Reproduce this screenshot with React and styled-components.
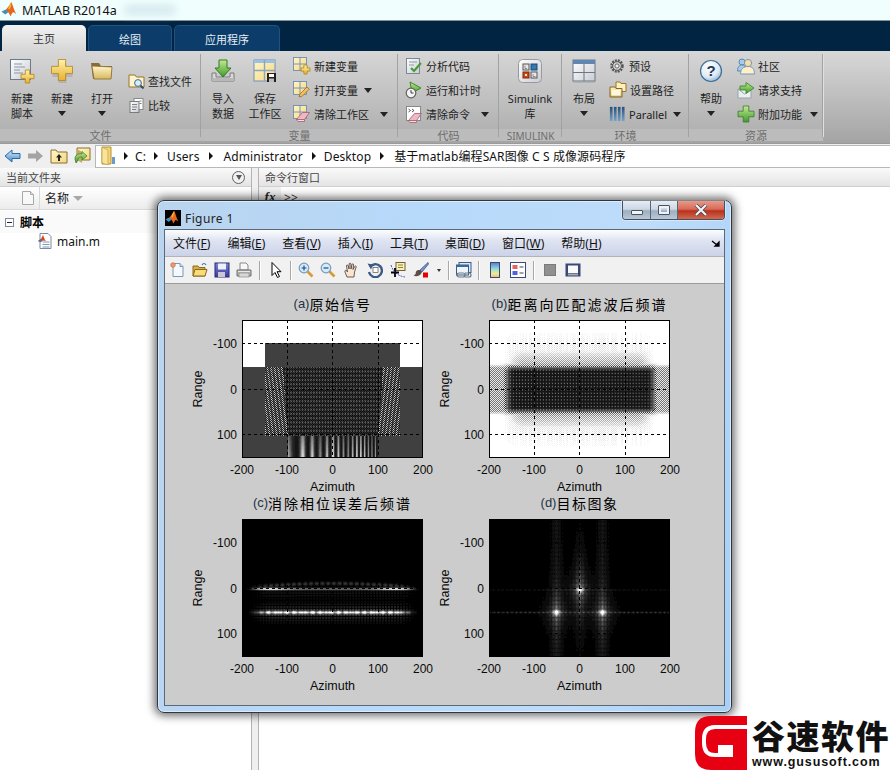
import React, { useMemo } from "react";
import styled, { createGlobalStyle } from "styled-components";

const GlobalStyle = createGlobalStyle`
	html, body {
		margin: 0;
		padding: 0;
		background: #fff;
	}
	#root {
		width: 890px;
		height: 770px;
		overflow: hidden;
	}
	* {
		box-sizing: border-box;
	}
`;

const UI_FONT = `"Noto Sans", "Noto Sans CJK SC", sans-serif`;

/* ---------- heatmap helpers: one path per grey level ---------- */

const smooth = (a, b, x) => {
	const t = Math.min(1, Math.max(0, (x - a) / (b - a)));
	return t * t * (3 - 2 * t);
};

const noise = (x, y) => {
	const s = Math.sin(x * 12.9898 + y * 78.233) * 43758.5453;
	return s - Math.floor(s);
};

const sourceSignal = (u, v) => {
	if (v < 23) return 1;
	if (v < 47 && (u < 23 || u >= 158)) return 1;
	const base = 0.24;
	const cx = u - 90.5;
	if (u >= 23 && u < 158 && v >= 47 && v < 116) {
		const half = 50 - (v - 47) * 0.07;
		if (Math.abs(cx) > half) {
			const slant = cx + Math.sign(cx) * (v - 80) * 0.14;
			const on = 0.5 + 0.5 * Math.cos(slant * 1.75);
			return (u + v) % 2 === 0 ? 0.2 + 0.55 * on + 0.12 * noise(u, v) : 0.14;
		}
		const lat = Math.abs(Math.cos(u * 1.1) * Math.cos(v * 0.74));
		return 0.03 + 0.3 * lat * lat + ((u + v) % 2 === 0 ? 0.12 : 0);
	}
	if (v >= 116 && Math.abs(cx) < 45) {
		const s = Math.pow(Math.abs(Math.cos(cx * 0.55 + cx * cx * 0.0045)), 4);
		return 0.1 + (0.5 + (v - 116) * 0.018) * s * (0.75 + 0.25 * Math.cos(cx * 0.24));
	}
	return base;
};

const rangeCompressed = (u, v) => {
	const dy = Math.abs(v - 69);
	const sx = smooth(7, 24, u) * smooth(174, 158, u);
	let d = 0.9 * sx * (1 - smooth(18, 28, dy));
	d = Math.max(d, 0.3 * (1 - smooth(21, 26, dy)));
	d = Math.max(d, 0.3 * smooth(14, 34, u) * smooth(167, 147, u) * (1 - smooth(20, 45, dy)));
	d = Math.max(d, 0.07 * smooth(10, 30, u) * smooth(170, 150, u) * (1 - smooth(40, 62, dy)) * (noise(u, 1) > 0.4 ? 1 : 0.2));
	if (d > 0.5) {
		const lat = Math.abs(Math.cos(u * 1.05) * Math.cos(v * 0.95));
		return 1 - d * (1 - 0.42 * Math.pow(lat, 5));
	}
	return (u + v) % 2 === 0 ? 1 - d * 1.8 : 1 - d * 0.25;
};

const phaseCorrected = (u, v) => {
	const env = smooth(4, 30, u) * smooth(177, 151, u);
	const dy1 = v - 69.5;
	const dy2 = v - 93;
	const arc = 69 - 5 * Math.cos(((u - 90) / 90) * 1.4);
	const edge = 0.45 + 0.55 * Math.exp(-Math.pow((Math.abs(u - 90.5) - 62) / 18, 2));
	let val = 1.0 * smooth(2, 20, u) * smooth(179, 161, u) * edge * Math.exp(-(dy1 * dy1) / 1.3);
	val += 0.22 * env * Math.exp(-((v - arc) * (v - arc)) / 3) * Math.abs(Math.cos(u * 0.55));
	val += 1.15 * env * Math.exp(-(dy2 * dy2) / 2.6) * (0.68 + 0.32 * Math.cos(u * 0.85) * Math.cos(u * 0.13));
	val += 0.26 * env * Math.exp(-(dy2 * dy2) / 70) * Math.abs(Math.cos(u * 1.05) * Math.cos(v * 1.15));
	val += 0.1 * env * Math.exp(-((v - 74) * (v - 74)) / 18) * Math.abs(Math.cos(u * 1.05) * Math.cos(v * 1.15));
	return Math.min(1, val);
};

const TARGETS = [
	[90.5, 70.5],
	[67, 93],
	[113, 93],
];

const targetImage = (u, v) => {
	let val = 0;
	TARGETS.forEach(([px, py], i) => {
		const dx = u - px;
		const dy = v - py;
		val += 0.7 * Math.exp(-(dx * dx + dy * dy * 1.6) / 9);
		const tex = 0.5 + 0.5 * Math.abs(Math.cos(dx * 0.95) * Math.cos(v * 0.72));
		val += 0.62 * Math.exp(-(Math.abs(dx) / 6 + Math.abs(dy) / 13)) * tex;
		val += 0.1 * tex * Math.exp(-(dx * dx) / 26) * (i === 0 ? 1.3 * Math.exp(-(dy * dy) / 2500) : 1);
		const line = Math.exp(-(dy * dy) / 0.9);
		val += (i === 0 ? 0.07 : 0.1) * line * (0.6 + 0.4 * Math.cos(u * 1.4));
	});
	return Math.min(1, val);
};

const LEVELS = 24;

const Heatmap = ({ fn, width, height }) => {
	const paths = useMemo(() => {
		const buckets = Array.from({ length: LEVELS + 1 }, () => []);
		for (let y = 0; y < height; y++) {
			let start = 0;
			let last = Math.round(fn(0, y) * LEVELS);
			for (let x = 1; x <= width; x++) {
				const lvl = x < width ? Math.round(fn(x, y) * LEVELS) : -1;
				if (lvl !== last) {
					if (last > 0) buckets[last].push(`M${start} ${y}h${x - start}v1h-${x - start}z`);
					start = x;
					last = lvl;
				}
			}
		}
		return buckets.map((b) => b.join(""));
	}, [fn, width, height]);
	return (
		<g shapeRendering="crispEdges">
			<rect width={width} height={height} fill="#000" />
			{paths.map((d, i) => {
				if (!d) return null;
				const g = Math.round((i / LEVELS) * 255);
				return <path key={i} d={d} fill={`rgb(${g},${g},${g})`} />;
			})}
		</g>
	);
};

/* ---------- figure subplot ---------- */

const AX_W = 181;
const AX_H = 138;
const X_TICKS = [
	[0, "-200"],
	[45, "-100"],
	[90.5, "0"],
	[136, "100"],
	[181, "200"],
];
const Y_TICKS = [
	[23, "-100"],
	[69, "0"],
	[114, "100"],
];

const PlotCell = styled.div`
	display: flex;
	flex-direction: column;
	height: 199px;
`;

const PlotTitle = styled.div`
	height: 25px;
	width: ${AX_W}px;
	margin-left: 54px;
	display: flex;
	justify-content: center;
	white-space: nowrap;
	font-family: "Noto Sans CJK SC", sans-serif;
	font-size: 14px;
	line-height: 18px;
	letter-spacing: ${(p) => p.$spacing}px;
	color: #000;
`;

const TitleTag = styled.span`
	font-family: "Liberation Sans", sans-serif;
	font-size: 13px;
	letter-spacing: 0;
	color: #234;
`;

const AxisText = styled.text`
	font-family: "Liberation Sans", sans-serif;
	font-size: ${(p) => p.$size}px;
	fill: #0a0a0a;
`;

const Subplot = ({ tag, title, fn, spacing }) => (
	<PlotCell>
		<PlotTitle $spacing={spacing}>
			<TitleTag>{tag}</TitleTag>
			{title}
		</PlotTitle>
		<svg width="247" height="174" style={{ overflow: "visible" }}>
			<g transform="translate(54 0)">
				<Heatmap fn={fn} width={AX_W} height={AX_H} />
				<g stroke="#000" strokeWidth="1" fill="none" shapeRendering="crispEdges">
					{X_TICKS.slice(1, 4).map(([x]) => (
						<path key={x} d={`M${Math.floor(x) + 0.5} 0V${AX_H}`} strokeDasharray="3 3" />
					))}
					{Y_TICKS.map(([y]) => (
						<path key={y} d={`M0 ${y + 0.5}H${AX_W}`} strokeDasharray="3 3" />
					))}
					<rect x="0.5" y="0.5" width={AX_W - 1} height={AX_H - 1} />
				</g>
				{X_TICKS.map(([x, t]) => (
					<AxisText key={x} $size="12" x={x} y={AX_H + 16} textAnchor="middle">
						{t}
					</AxisText>
				))}
				{Y_TICKS.map(([y, t]) => (
					<AxisText key={y} $size="12" x="-5" y={y + 5} textAnchor="end">
						{t}
					</AxisText>
				))}
				<AxisText $size="12.5" x={AX_W / 2} y={AX_H + 33} textAnchor="middle">
					Azimuth
				</AxisText>
				<AxisText $size="12.5" transform={`translate(-40 ${AX_H / 2}) rotate(-90)`} textAnchor="middle">
					Range
				</AxisText>
			</g>
		</svg>
	</PlotCell>
);

/* ---------- icons ---------- */

const HiddenDefs = styled.svg`
	position: absolute;
	width: 0;
	height: 0;
`;

const Defs = () => (
	<HiddenDefs aria-hidden="true">
		<defs>
			<linearGradient id="gold" x1="0" y1="0" x2="0" y2="1">
				<stop offset="0" stopColor="#fff3a8" />
				<stop offset="1" stopColor="#e8b030" />
			</linearGradient>
			<linearGradient id="folder" x1="0" y1="0" x2="0" y2="1">
				<stop offset="0" stopColor="#fff6c8" />
				<stop offset="1" stopColor="#d8b860" />
			</linearGradient>
			<linearGradient id="green" x1="0" y1="0" x2="0" y2="1">
				<stop offset="0" stopColor="#c4ea90" />
				<stop offset="1" stopColor="#3e9a2c" />
			</linearGradient>
			<linearGradient id="paper" x1="0" y1="0" x2="1" y2="1">
				<stop offset="0" stopColor="#ffffff" />
				<stop offset="1" stopColor="#c8ccd4" />
			</linearGradient>
			<linearGradient id="cell" x1="0" y1="0" x2="1" y2="1">
				<stop offset="0" stopColor="#fff6c8" />
				<stop offset="1" stopColor="#f4d880" />
			</linearGradient>
			<linearGradient id="sky" x1="0" y1="0" x2="0" y2="1">
				<stop offset="0" stopColor="#d4ecff" />
				<stop offset="1" stopColor="#4c8cc8" />
			</linearGradient>
			<radialGradient id="helpball" cx="0.4" cy="0.3" r="0.8">
				<stop offset="0" stopColor="#ffffff" />
				<stop offset="0.6" stopColor="#dfeaf4" />
				<stop offset="1" stopColor="#7fa8cc" />
			</radialGradient>
			<linearGradient id="rainbow" x1="0" y1="0" x2="0" y2="1">
				<stop offset="0" stopColor="#5a78d8" />
				<stop offset="0.45" stopColor="#98e0d0" />
				<stop offset="0.75" stopColor="#f0ec90" />
				<stop offset="1" stopColor="#f4b070" />
			</linearGradient>
			<linearGradient id="blueBars" x1="0" y1="0" x2="0" y2="1">
				<stop offset="0" stopColor="#24507c" />
				<stop offset="1" stopColor="#7aa2c8" />
			</linearGradient>
			<linearGradient id="floppy" x1="0" y1="0" x2="0" y2="1">
				<stop offset="0" stopColor="#7a82d8" />
				<stop offset="1" stopColor="#3a3c98" />
			</linearGradient>
		</defs>
	</HiddenDefs>
);

const Svg = ({ s = 16, vb = 16, children }) => (
	<svg width={s} height={s} viewBox={`0 0 ${vb} ${vb}`} style={{ flex: "none", display: "block" }}>
		{children}
	</svg>
);

const Plus = ({ x, y, r, w, fill = "url(#gold)", stroke = "#b08420" }) => (
	<path
		d={`M${x - w} ${y - r}h${2 * w}v${r - w}h${r - w}v${2 * w}h${-(r - w)}v${r - w}h${-2 * w}v${-(r - w)}h${-(r - w)}v${-2 * w}h${r - w}z`}
		fill={fill}
		stroke={stroke}
		strokeWidth="0.8"
	/>
);

const GridCell = ({ size = 13 }) => (
	<g stroke="#6f8db8" strokeWidth="0.9">
		<rect x="0.5" y="0.5" width={size} height={size} fill="url(#cell)" />
		<path d={`M${size / 2 + 0.5} 0.5V${size + 0.5}M0.5 ${size / 2 + 0.5}H${size + 0.5}`} />
	</g>
);

const Eraser = ({ t }) => (
	<g transform={t}>
		<path d="M0 8L6 1h7l-5 7z" fill="#f0b8c4" stroke="#a06070" strokeWidth="0.8" />
		<path d="M0 8l1.5 2h6.5L8 8z" fill="#f8dce0" stroke="#a06070" strokeWidth="0.8" />
	</g>
);

const IconNewScript = () => (
	<Svg s={26} vb={26}>
		<rect x="1.5" y="1.5" width="20" height="20" fill="url(#paper)" stroke="#6a7a8c" />
		<path d="M5 6h8M5 9h11M5 12h6M5 15h9" stroke="#8a96a4" strokeWidth="1" />
		<Plus x={18.5} y={18.5} r={6.5} w={2.2} />
	</Svg>
);

const IconPlusLarge = () => (
	<Svg s={24} vb={24}>
		<path d="M8 3h8v6h6v8h-6v6H8v-6H2V9h6z" fill="#9a9a9a" opacity="0.45" transform="translate(0.5 1)" />
		<Plus x={12} y={11} r={10.5} w={3.6} />
	</Svg>
);

const IconFolderLarge = () => (
	<Svg s={24} vb={24}>
		<path d="M1 4h8l2 3h11l-1 13H3z" fill="#8a6a3a" />
		<path d="M2 7l2 13h17l1-12z" fill="url(#folder)" stroke="#8a6a30" strokeWidth="0.8" />
	</Svg>
);

const IconFind = () => (
	<Svg s={17} vb={17}>
		<path d="M1 2h6l1.5 2H16v10H1z" fill="#fdf4d0" stroke="#9a7428" />
		<circle cx="10" cy="10" r="3.4" fill="#d8ecfa" stroke="#3a6a90" />
		<path d="M12.5 12.5l3 3" stroke="#2a4a70" strokeWidth="1.8" />
	</Svg>
);

const IconCompare = () => (
	<Svg s={17} vb={17}>
		<rect x="6" y="1.5" width="9" height="11" fill="#fff" stroke="#8a8a8a" />
		<rect x="2" y="4.5" width="9" height="11" fill="url(#paper)" stroke="#7a7a7a" />
		<path d="M4 7.5h5M4 10h5M4 12.5h4M11.5 4h2M11.5 6.500h2" stroke="#808080" />
	</Svg>
);

const IconImport = () => (
	<Svg s={24} vb={24}>
		<path d="M1 14h4v4h14v-4h4v8H1z" fill="#d8d8d8" stroke="#7a7a7a" />
		<rect x="1" y="19" width="22" height="3" fill="#b8b8b8" />
		<path d="M8 1h8v8h4l-8 9-8-9h4z" fill="url(#green)" stroke="#2f7a20" />
	</Svg>
);

const IconSaveWs = () => (
	<Svg s={24} vb={24}>
		<rect x="1" y="1" width="21" height="21" fill="url(#cell)" stroke="#7090b8" />
		<rect x="1" y="1" width="21" height="3" fill="#9cc0e4" />
		<path d="M11.500 1v21M1 11.500h21" stroke="#8aa4c4" strokeWidth="1.4" />
		<rect x="14" y="14" width="9" height="9" fill="#202020" />
		<rect x="16" y="15" width="5" height="3" fill="#fff" />
		<rect x="16" y="19.500" width="5" height="3.500" fill="#bbb" />
	</Svg>
);

const IconNewVar = () => (
	<Svg s={18} vb={18}>
		<GridCell />
		<Plus x={12.5} y={12.5} r={4.5} w={1.6} />
	</Svg>
);

const IconOpenVar = () => (
	<Svg s={18} vb={18}>
		<GridCell />
		<path d="M6 16l1-3 7-7 2.200 2.200-7 7z" fill="#f2c060" stroke="#a06820" strokeWidth="0.8" />
	</Svg>
);

const IconClearWs = () => (
	<Svg s={18} vb={18}>
		<GridCell />
		<Eraser t="translate(3.500 6.500)" />
	</Svg>
);

const IconAnalyze = () => (
	<Svg s={18} vb={18}>
		<rect x="1.500" y="1.500" width="13" height="15" fill="url(#paper)" stroke="#7a8a94" />
		<path d="M4 5h8M4 8h5" stroke="#909aa4" />
		<path d="M6 11l3 3 7-8" fill="none" stroke="#4a9a38" strokeWidth="2.200" />
	</Svg>
);

const IconRunTime = () => (
	<Svg s={18} vb={18}>
		<path d="M5 1l11 6-9 5z" fill="url(#green)" stroke="#3a8a28" />
		<circle cx="6" cy="12" r="4.800" fill="#f4f4f4" stroke="#606060" strokeWidth="1.200" />
		<path d="M6 9v3h2.500" fill="none" stroke="#404040" />
	</Svg>
);

const IconClearCmd = () => (
	<Svg s={18} vb={18}>
		<rect x="1.500" y="1.500" width="14" height="14" fill="#fff" stroke="#888" />
		<path d="M3.500 4l2 1.500-2 1.500M7 4l2 1.500-2 1.500" fill="none" stroke="#333" strokeWidth="0.8" />
		<Eraser t="translate(3.500 7.500)" />
	</Svg>
);

const IconSimulink = () => (
	<Svg s={24} vb={24}>
		<rect x="0.500" y="0.500" width="23" height="23" rx="4" fill="url(#paper)" stroke="#9a9a9a" />
		<g strokeWidth="1">
			<rect x="5" y="5" width="6" height="6" fill="#e8e8e8" stroke="#555" />
			<rect x="13" y="5" width="6" height="6" fill="#2a78b8" stroke="#1a4a78" />
			<rect x="5" y="13" width="6" height="6" fill="#c84a18" stroke="#802808" />
			<rect x="13" y="13" width="6" height="6" fill="#e8e8e8" stroke="#555" />
		</g>
		<rect x="7" y="15" width="2" height="2" fill="#f4e0c0" />
		<path d="M7 6.500v3h2M15 8h2v-1.500M15 15v2.500h2.500" fill="none" stroke="#777" strokeWidth="0.8" />
	</Svg>
);

const IconLayout = () => (
	<Svg s={24} vb={24}>
		<rect x="1" y="1" width="22" height="21" fill="url(#paper)" stroke="#6a7680" />
		<rect x="1" y="1" width="22" height="4" fill="#5f87b0" />
		<path d="M12 5v17M1 13.500h22" stroke="#6a7680" />
		<rect x="1" y="22" width="22" height="1.500" fill="#a0a0a0" />
	</Svg>
);

const IconGear = () => (
	<Svg s={16} vb={16}>
		<circle cx="8" cy="8" r="5.500" fill="none" stroke="#555" strokeWidth="2.400" strokeDasharray="1.900 1.000" />
		<circle cx="8" cy="8" r="4.300" fill="#d8d8d8" stroke="#555" />
		<circle cx="8" cy="8" r="2.100" fill="#f0f0f0" stroke="#666" />
	</Svg>
);

const IconPath = () => (
	<Svg s={18} vb={18}>
		<path d="M7 1h4l1 1.500h5v8H7z" fill="#fff0c0" stroke="#9a7428" />
		<path d="M1 6h5l1 1.500h6V16H1z" fill="url(#folder)" stroke="#8a6420" />
		<rect x="2.500" y="9" width="9" height="5.500" fill="#fff8e0" />
	</Svg>
);

const IconParallel = () => (
	<Svg s={16} vb={18}>
		<g fill="url(#blueBars)">
			<rect x="1" y="1" width="3" height="16" />
			<rect x="5.500" y="1" width="3" height="16" />
			<rect x="10" y="1" width="3" height="16" />
			<rect x="14.500" y="1" width="3" height="16" />
		</g>
	</Svg>
);

const IconHelp = () => (
	<Svg s={24} vb={24}>
		<circle cx="12" cy="12" r="10.500" fill="url(#helpball)" stroke="#3c6e96" strokeWidth="1.200" />
		<text x="12" y="17" textAnchor="middle" fontFamily="Liberation Sans, sans-serif" fontWeight="700" fontSize="15" fill="#233a5a">
			?
		</text>
	</Svg>
);

const IconCommunity = () => (
	<Svg s={18} vb={18}>
		<circle cx="5" cy="5" r="3" fill="#a8cce8" stroke="#5a8ab0" />
		<path d="M0.500 14c0-4 2-6 4.500-6s3 1 3 2v4z" fill="#a8cce8" stroke="#5a8ab0" />
		<circle cx="11" cy="6" r="3.600" fill="#f8dca8" stroke="#7a98b8" />
		<path d="M3.500 17c0-5 3-7.500 7.500-7.500s6.500 2.500 6.500 7.500z" fill="#fff0c8" stroke="#7a98b8" />
	</Svg>
);

const IconSupport = () => (
	<Svg s={18} vb={18}>
		<path d="M1 8h13v9H1z" fill="#eceff2" stroke="#9aa2aa" />
		<path d="M1 8l6.500 5L14 8" fill="none" stroke="#9aa2aa" />
		<path d="M3 5h6V1.500L17 7l-8 5.500V9H3z" fill="url(#green)" stroke="#3a8a28" strokeWidth="0.9" />
	</Svg>
);

const IconAddon = () => (
	<Svg s={18} vb={18}>
		<Plus x={9} y={9} r={8} w={2.800} fill="url(#green)" stroke="#3a7a28" />
	</Svg>
);

const IconBack = () => (
	<Svg s={18} vb={18}>
		<path d="M1 9l7-6v3.500h8v5H8V15z" fill="url(#sky)" stroke="#2a6aa0" />
	</Svg>
);

const IconForward = () => (
	<Svg s={18} vb={18}>
		<path d="M17 9l-7-6v3.500H2v5h8V15z" fill="#a4a4a4" />
	</Svg>
);

const IconUpFolder = () => (
	<Svg s={18} vb={18}>
		<path d="M1 3h5l1.500 2H17v11H1z" fill="url(#cell)" stroke="#8a7030" />
		<path d="M9 7l-3 3.500h2V14h2v-3.500h2z" fill="#222" />
	</Svg>
);

const IconBrowse = () => (
	<Svg s={18} vb={18}>
		<path d="M4 1h13v12H4z" fill="url(#cell)" stroke="#8a7030" />
		<path d="M4 2l5 3v11l-5-3z" fill="#c8a860" />
		<path d="M2 12c0-4 3-6 7-5V4.500L14 9l-5 4v-3c-2-.5-4 .5-4.500 4l-1.500 2z" fill="url(#green)" stroke="#2f7a20" strokeWidth="0.7" />
	</Svg>
);

const IconAddressFolder = () => (
	<Svg s={20} vb={20}>
		<path d="M3 1h9v17H3z" fill="#f4d878" stroke="#b89030" />
		<path d="M3 1l6 3v15l-6-2z" fill="#f8e498" stroke="#b89030" strokeWidth="0.6" />
		<rect x="13" y="11" width="3" height="7" fill="#6a9ac8" />
	</Svg>
);

const IconPage = () => (
	<Svg s={14} vb={14}>
		<path d="M1.500 0.500h8l3 3v10h-11z" fill="#f8f8f8" stroke="#a8a8a8" />
		<path d="M9.500 0.500v3h3" fill="#e0e0e0" stroke="#a8a8a8" />
	</Svg>
);

const IconScript = () => (
	<Svg s={16} vb={16}>
		<path d="M3 0.500h8l3 3v12H3z" fill="#fff" stroke="#7a8aa0" />
		<path d="M5.500 9h7M5.500 11.500h7M5.500 14h7" stroke="#7a98b8" />
		<path d="M1 8l3-2 2-4 2 5 1 1-3-.5L4 9z" fill="#d8481c" />
		<path d="M1 8l3-2 1 1.500-1.500 1.500z" fill="#3a7ab8" />
	</Svg>
);

const IconMatlab = ({ s = 16, bg }) => (
	<Svg s={s} vb={16}>
		{bg && <rect width="16" height="16" fill="#000" />}
		<path d="M0.500 9.500L4.500 7.500 7 4.500l2-3.500c.5 0 .9 1.200 1.600 3.400.6 2 1.600 4.800 2.900 7.100-1.100-.7-2-1.700-2.700-1.600-.7.100-1.300 1.900-2.500 3.600-.7-1.700-1.400-3.500-2.600-4.400-1.300.2-2.200-.1-3 .4z" fill="#e8661c" />
		<path d="M0.500 9.500L4.500 7.500l2.300 2.500c-1.300.4-1.900 1.100-3 2z" fill="#3f8fc0" />
		<path d="M7 4.500l2-3.500c.3 2 .2 4-1.600 6.700l-1-1z" fill="#f4b030" />
	</Svg>
);

/* figure toolbar icons */

const ToolNew = () => (
	<Svg>
		<path d="M3 1.500h7l3 3v10H3z" fill="#f4f9ff" stroke="#7a98b8" />
		<path d="M10 1.500v3h3" fill="#cfe0f0" stroke="#7a98b8" />
		<circle cx="3" cy="3" r="2.300" fill="#f09a70" stroke="#c85a30" strokeWidth="0.6" />
	</Svg>
);
const ToolOpen = () => (
	<Svg>
		<path d="M1 4h5l1 1.500h6V14H1z" fill="#d8b040" stroke="#8a6820" />
		<path d="M1 14l2-6.500h12L13 14z" fill="#f8dc78" stroke="#8a6820" />
		<path d="M10 3c1-2 3-2 4 0" fill="none" stroke="#3a7ab8" strokeWidth="1.200" />
	</Svg>
);
const ToolSave = () => (
	<Svg>
		<rect x="1" y="1" width="14" height="14" fill="url(#floppy)" stroke="#2a2a78" />
		<rect x="4" y="1.500" width="8" height="6" fill="#f0f0f8" />
		<rect x="4" y="10" width="7" height="5" fill="#c8c8d8" />
	</Svg>
);
const ToolPrint = () => (
	<Svg>
		<path d="M4 1h6l2 2v5H4z" fill="#f8f8f8" stroke="#888" />
		<path d="M1 8h14v6H1z" fill="#b8b8b8" stroke="#707070" />
		<rect x="3" y="11" width="10" height="4" fill="#d8d8d8" stroke="#808080" strokeWidth="0.6" />
		<path d="M2 9.500h12" stroke="#e8e8e8" />
	</Svg>
);
const ToolPointer = () => (
	<Svg>
		<path d="M4 0.500v13l3-3 2.500 5 2-1-2.500-4.800h4z" fill="#fff" stroke="#000" />
	</Svg>
);
const ToolZoom = ({ minus }) => (
	<Svg>
		<path d="M9.500 9.500l5 5" stroke="#d89a38" strokeWidth="2.600" />
		<circle cx="6" cy="6" r="4.800" fill="#d4ecfa" stroke="#7a9ab8" strokeWidth="1.200" />
		<path d={minus ? "M3.500 6h5" : "M3.500 6h5M6 3.500v5"} stroke="#1a4a88" strokeWidth="1.200" />
	</Svg>
);
const ToolHand = () => (
	<Svg>
		<path d="M4 15l-2-5c-.5-1.500.5-2 1.500-1.500L4.500 10 3.500 4c-.2-1.200 1.300-1.500 1.700-.3L6 7l.2-5c0-1.200 1.600-1.200 1.700 0L8 7l1-4.500c.3-1.200 1.800-.8 1.600.4L10 7.500l1.700-3c.6-1 1.900-.4 1.400.7L11.500 10l-.5 5z" fill="#fbe4cc" stroke="#443a38" strokeWidth="0.8" />
	</Svg>
);
const ToolRotate = () => (
	<Svg>
		<path d="M3 5a6.500 6.500 0 1 1-1 5" fill="none" stroke="#3a5a88" strokeWidth="2.400" />
		<path d="M0.500 1.500l5.500 1-2 5z" fill="#3a5a88" />
		<rect x="6" y="5.500" width="5" height="5" fill="#fff" stroke="#555" strokeWidth="0.7" />
	</Svg>
);
const ToolDataCursor = () => (
	<Svg>
		<rect x="6" y="0.500" width="9" height="8" fill="#f8f0b8" stroke="#706030" />
		<path d="M8 3h5M8 5.500h5" stroke="#706030" strokeWidth="0.8" />
		<path d="M5 15V6M1 10.500h8" stroke="#000" strokeWidth="1.800" />
		<path d="M1 3c2 7 7 11 14 12" fill="none" stroke="#2030c0" strokeWidth="0.8" strokeDasharray="2 1" />
	</Svg>
);
const ToolBrush = () => (
	<Svg>
		<path d="M15 0.500L7 8l2 2 6.500-8z" fill="#7a90d8" stroke="#38487a" strokeWidth="0.7" />
		<path d="M7 8c-3-.5-5 2-4 3-1 2-2 2.500-2.500 2.800 3 1 7 .5 8.500-3.800z" fill="#5a5048" />
		<rect x="10" y="10.500" width="5" height="5" fill="#e80000" />
	</Svg>
);
const ToolLink = () => (
	<Svg>
		<rect x="3" y="0.500" width="12" height="10" fill="#d8e8f4" stroke="#3a5a88" />
		<rect x="0.500" y="3" width="12" height="10" fill="#eef4fa" stroke="#3a5a88" />
		<rect x="0.500" y="3" width="12" height="2" fill="#3a6a98" />
		<path d="M3 11h4a2 2 0 0 1 0 4H3a2 2 0 0 1 0-4zM9 11h4a2 2 0 0 1 0 4H9" fill="none" stroke="#6a7a88" strokeWidth="1.200" />
	</Svg>
);
const ToolColorbar = () => (
	<Svg>
		<rect x="3.500" y="0.500" width="9" height="15" fill="url(#rainbow)" stroke="#3a4a78" />
	</Svg>
);
const ToolLegend = () => (
	<Svg>
		<rect x="0.500" y="0.500" width="15" height="15" fill="#fff" stroke="#3a4a78" />
		<rect x="2.500" y="3" width="5" height="4" fill="#e86060" />
		<rect x="2.500" y="9" width="5" height="4" fill="#5060e0" />
		<path d="M9.500 5h4M9.500 11h4" stroke="#444" />
	</Svg>
);
const ToolGrey = () => (
	<Svg>
		<rect x="2.500" y="2.500" width="11" height="11" fill="#909090" stroke="#7a7a7a" />
	</Svg>
);
const ToolFrame = () => (
	<Svg>
		<rect x="0.500" y="1.500" width="15" height="13" fill="#3a4a78" />
		<rect x="3" y="3.500" width="10" height="7.500" fill="#fafafa" />
		<rect x="3" y="11.500" width="10" height="2" fill="#a8a8a8" />
	</Svg>
);

/* ---------- app chrome ---------- */

const Desktop = styled.div`
	position: relative;
	width: 890px;
	height: 770px;
	display: flex;
	flex-direction: column;
	font-family: ${UI_FONT};
	background: #fff;
	overflow: hidden;
`;

const TitleBar = styled.div`
	height: 21px;
	flex: none;
	display: flex;
	align-items: center;
	padding-left: 1px;
	gap: 3px;
	background: #f0fefe;
	border-bottom: 1px solid #8a9094;
	font-size: 12.500px;
	color: #111;
`;

const BlurredPath = styled.span`
	margin-left: 5px;
	width: 50px;
	height: 8px;
	background: #cfe4ea;
	filter: blur(4px);
`;

const TabStrip = styled.div`
	height: 30px;
	flex: none;
	display: flex;
	align-items: flex-end;
	gap: 2px;
	padding-left: 2px;
	background: #012442;
`;

const Tab = styled.div`
	width: ${(p) => p.$w}px;
	height: 26px;
	display: flex;
	align-items: center;
	justify-content: center;
	border-radius: 5px 5px 0 0;
	font-size: 11px;
	color: ${(p) => (p.$active ? "#333" : "#e8eef4")};
	background: ${(p) => (p.$active ? "linear-gradient(#f2f2f2, #d6d6d6)" : "#0b3c6a")};
	border: ${(p) => (p.$active ? "none" : "1px solid #1f527f")};
	border-bottom: none;
`;

const Ribbon = styled.div`
	height: 93px;
	flex: none;
	display: flex;
	background: linear-gradient(#d8d8d8, #a4a4a4);
	border-bottom: 1px solid #9a9a9a;
`;

const Section = styled.div`
	width: ${(p) => p.$w}px;
	flex: none;
	display: flex;
	flex-direction: column;
	padding-top: 3px;
	position: relative;
	&::after {
		content: "";
		position: absolute;
		right: 0;
		top: 3px;
		bottom: 6px;
		width: 1px;
		background: #a2a2a2;
		box-shadow: 1px 0 0 #e0e0e0;
	}
`;

const SectionBody = styled.div`
	height: 75px;
	flex: none;
	display: flex;
	padding-left: ${(p) => p.$pad}px;
	background: linear-gradient(#d6d6d6, #b2b2b2);
	margin-top: -3px;
	padding-top: 3px;
	box-sizing: content-box;
`;

const SectionLabel = styled.div`
	height: 12px;
	flex: none;
	display: flex;
	align-items: center;
	justify-content: center;
	padding-top: 1px;
	background: #bcbcbc;
	font-size: ${(p) => (p.$latin ? 10 : 11)}px;
	line-height: 12px;
	color: #6e6e6e;
`;

const LargeButton = styled.div`
	width: ${(p) => p.$w}px;
	flex: none;
	display: flex;
	flex-direction: column;
	align-items: center;
	padding-top: 5px;
	font-size: 11px;
	line-height: 15px;
	color: #222;
	margin-right: ${(p) => p.$mr || 0}px;
`;

const IconBox = styled.div`
	height: 24px;
	margin-bottom: 8px;
	display: flex;
	align-items: center;
`;

const ButtonLine = styled.div`
	height: 15px;
	display: flex;
	align-items: center;
	white-space: nowrap;
`;

const SmallColumn = styled.div`
	display: flex;
	flex-direction: column;
	flex: none;
	padding-top: ${(p) => p.$top || 0}px;
	width: ${(p) => p.$w}px;
	margin-left: ${(p) => p.$ml || 0}px;
`;

const SmallButton = styled.div`
	height: 24px;
	display: flex;
	align-items: center;
	gap: ${(p) => p.$gap ?? 3}px;
	font-size: 11px;
	color: #222;
	white-space: nowrap;
`;

const Caret = styled.span`
	width: 0;
	height: 0;
	border-left: 4.500px solid transparent;
	border-right: 4.500px solid transparent;
	border-top: 5px solid #222;
	margin-left: ${(p) => p.$ml || 0}px;
`;

const AddressBar = styled.div`
	height: 24px;
	flex: none;
	display: flex;
	align-items: center;
	background: #efefef;
	padding-left: 3px;
`;

const NavButton = styled.div`
	width: ${(p) => p.$w}px;
	height: 20px;
	display: flex;
	align-items: center;
	justify-content: center;
	flex: none;
`;

const PathBox = styled.div`
	flex: 1;
	margin-left: 2px;
	height: 23px;
	display: flex;
	align-items: center;
	background: #fff;
	border: 1px solid #b8b8b8;
	border-right: none;
	padding-left: 3px;
	font-size: 12px;
	color: #111;
	white-space: nowrap;
	letter-spacing: 0.1px;
`;

const Crumb = styled.span`
	margin-left: ${(p) => p.$ml}px;
`;

const CrumbArrow = styled.span`
	width: 0;
	height: 0;
	margin-left: ${(p) => p.$ml}px;
	border-top: 4px solid transparent;
	border-bottom: 4px solid transparent;
	border-left: 4px solid #111;
`;

const Panels = styled.div`
	flex: 1;
	display: flex;
	min-height: 0;
	background: #ececec;
`;

const LeftPanel = styled.div`
	width: 252px;
	flex: none;
	display: flex;
	flex-direction: column;
	background: #fff;
	border-right: 1px solid #b4b4b4;
`;

const Gutter = styled.div`
	width: 6px;
	flex: none;
	background: #efefef;
`;

const RightPanel = styled.div`
	flex: 1;
	display: flex;
	flex-direction: column;
	background: #fff;
	border-left: 1px solid #b4b4b4;
`;

const PanelHeader = styled.div`
	height: 19px;
	flex: none;
	display: flex;
	align-items: center;
	justify-content: space-between;
	padding: 0 6px;
	background: linear-gradient(#fafafa, #e4e4e4);
	border-bottom: 1px solid #d0d0d0;
	font-size: 11px;
	color: #444;
`;

const PanelMenu = styled.div`
	width: 13px;
	height: 13px;
	border: 1px solid #606060;
	border-radius: 50%;
	display: flex;
	align-items: center;
	justify-content: center;
	background: #f0f0f0;
	&::after {
		content: "";
		border-left: 3.500px solid transparent;
		border-right: 3.500px solid transparent;
		border-top: 5px solid #555;
		margin-top: 1px;
	}
`;

const ColumnRow = styled.div`
	height: 23px;
	flex: none;
	display: flex;
	align-items: center;
	background: linear-gradient(#fff, #ececec);
	border-bottom: 1px solid #d8d8d8;
	font-size: 12px;
	color: #222;
`;

const ColumnIcon = styled.div`
	width: 40px;
	align-self: stretch;
	display: flex;
	align-items: center;
	justify-content: flex-end;
	padding-right: 4px;
	border-right: 1px solid #d8d8d8;
`;

const ColumnName = styled.div`
	display: flex;
	align-items: center;
	padding-left: 5px;
	gap: 4px;
`;

const SortCaret = styled.span`
	border-left: 5px solid transparent;
	border-right: 5px solid transparent;
	border-top: 5px solid #a8a8a8;
`;

const TreeGroup = styled.div`
	height: 22px;
	display: flex;
	align-items: center;
	padding: 0 0 0 5px;
	margin-top: 1px;
	gap: 6px;
	font-size: 12px;
	font-weight: 700;
	color: #000;
	background: #fafafa;
`;

const Collapse = styled.span`
	width: 9px;
	height: 9px;
	border: 1px solid #7a8aa0;
	position: relative;
	background: #fff;
	&::after {
		content: "";
		position: absolute;
		left: 1px;
		right: 1px;
		top: 3px;
		height: 1px;
		background: #223;
	}
`;

const TreeFile = styled.div`
	height: 16px;
	display: flex;
	align-items: center;
	gap: 4px;
	padding-left: 37px;
	font-size: 12px;
	color: #111;
`;

const Prompt = styled.div`
	display: flex;
	align-items: center;
	height: 20px;
	background: #fff;
	font-size: 12px;
	color: #333;
`;

const FxMark = styled.span`
	width: 22px;
	height: 100%;
	display: flex;
	align-items: center;
	justify-content: center;
	background: #f0f0f0;
	font-family: "Liberation Serif", serif;
	font-style: italic;
	font-weight: 700;
	font-size: 13px;
	color: #222;
`;

/* ---------- figure window ---------- */

const FigureWindow = styled.div`
	position: absolute;
	left: 157px;
	top: 200px;
	width: 575px;
	height: 513px;
	display: flex;
	flex-direction: column;
	padding: 0 6px 6px;
	border-radius: 7px;
	border: 1px solid #2e3640;
	background: linear-gradient(100deg, #b9d4ee 0%, #b7d9fa 40%, #bedcfa 75%, #a8cff5 100%);
	box-shadow: 0 0 9px 3px rgba(0, 0, 0, 0.55), inset 0 0 0 1px rgba(255, 255, 255, 0.5);
`;

const FigureTitle = styled.div`
	height: 28px;
	flex: none;
	display: flex;
	align-items: center;
	justify-content: space-between;
	font-size: 12px;
	color: #222;
	letter-spacing: 0.4px;
`;

const FigureName = styled.div`
	display: flex;
	align-items: center;
	gap: 4px;
	padding-top: 6px;
	padding-left: 1px;
`;

const Caption = styled.div`
	display: flex;
	align-self: flex-start;
	margin-right: 0;
	height: 18.500px;
	border: 1px solid #46505c;
	border-top: none;
	border-radius: 0 0 4px 4px;
	overflow: hidden;
	box-shadow: 0 0 0 1px rgba(255, 255, 255, 0.4);
`;

const CaptionButton = styled.div`
	width: ${(p) => p.$w}px;
	display: flex;
	align-items: center;
	justify-content: center;
	border-left: ${(p) => (p.$first ? "none" : "1px solid #5a6674")};
	background: ${(p) =>
		p.$close
			? "linear-gradient(#e89a88 0%, #d86a58 45%, #b8321e 55%, #d06a50 100%)"
			: "linear-gradient(#e6edf4 0%, #ccd8e4 45%, #9eafc0 55%, #b8c8d8 100%)"};
`;

const MinGlyph = styled.span`
	width: 12px;
	height: 5px;
	margin-top: 6px;
	background: #f4f4f4;
	border: 1px solid #4a5460;
	border-radius: 1px;
`;

const MaxGlyph = styled.span`
	width: 12px;
	height: 10px;
	background: transparent;
	border: 1px solid #4a5460;
	border-radius: 1px;
	box-shadow: inset 0 0 0 2px #eef2f6;
`;

const FigureClient = styled.div`
	flex: 1;
	display: flex;
	flex-direction: column;
	min-height: 0;
	border: 1px solid #5a6878;
	background: #ccc;
`;

const MenuBar = styled.div`
	height: 27px;
	flex: none;
	display: flex;
	align-items: center;
	gap: 17px;
	padding-left: 8px;
	position: relative;
	background: linear-gradient(#fcfdfe 0%, #dfe4f2 40%, #ccd3e8 100%);
	border-bottom: 1px solid #b0b4b8;
	font-size: 12px;
	color: #111;
`;

const MenuItem = styled.span`
	white-space: nowrap;
	u {
		text-decoration: underline;
		text-underline-offset: 1px;
	}
`;

const MenuCorner = styled.span`
	position: absolute;
	right: 4px;
	top: 9px;
	display: flex;
`;

const ToolBar = styled.div`
	height: 27px;
	flex: none;
	display: flex;
	align-items: center;
	padding-left: 2px;
	background: #f1f1f1;
	border-bottom: 1px solid #9c9c9c;
`;

const ToolButton = styled.div`
	width: ${(p) => p.$w || 22}px;
	height: 22px;
	flex: none;
	display: flex;
	align-items: center;
	justify-content: center;
`;

const ToolSep = styled.div`
	width: 1px;
	height: 19px;
	flex: none;
	margin: 0 ${(p) => p.$r}px 0 ${(p) => p.$l}px;
	background: #a8a8a8;
	box-shadow: 1px 0 0 #fff;
`;

const ToolCaret = styled.span`
	border-left: 2.500px solid transparent;
	border-right: 2.500px solid transparent;
	border-top: 3px solid #333;
	margin-left: 5px;
`;

const FigureBody = styled.div`
	flex: 1;
	display: grid;
	grid-template-columns: 247px 247px;
	grid-auto-rows: 199px;
	padding: 11px 0 0 23px;
	background: #ccc;
`;

/* ---------- watermark logo ---------- */

const Logo = styled.div`
	position: absolute;
	right: 0;
	bottom: 0;
	width: 197px;
	height: 54px;
	display: flex;
	align-items: stretch;
	gap: 5px;
	padding-left: 0;
`;

const LogoText = styled.div`
	display: flex;
	flex-direction: column;
`;

const LogoName = styled.div`
	height: 39px;
	font-family: "Noto Sans CJK SC", sans-serif;
	font-weight: 900;
	font-size: 33px;
	line-height: 39px;
	letter-spacing: 1.500px;
	color: #111;
	white-space: nowrap;
`;

const LogoUrl = styled.div`
	font-family: "Liberation Sans", sans-serif;
	font-weight: 700;
	font-size: 12.500px;
	line-height: 14px;
	letter-spacing: 0.900px;
	color: #111;
`;

const MENU = [
	["文件(", "F", ")"],
	["编辑(", "E", ")"],
	["查看(", "V", ")"],
	["插入(", "I", ")"],
	["工具(", "T", ")"],
	["桌面(", "D", ")"],
	["窗口(", "W", ")"],
	["帮助(", "H", ")"],
];

const App = () => (
	<Desktop>
		<GlobalStyle />
		<Defs />
		<TitleBar>
			<IconMatlab s={18} />
			MATLAB R2014a
			<BlurredPath />
		</TitleBar>
		<TabStrip>
			<Tab $w={84} $active>
				主页
			</Tab>
			<Tab $w={84}>绘图</Tab>
			<Tab $w={106}>应用程序</Tab>
		</TabStrip>
		<Ribbon>
			<Section $w={201}>
				<SectionBody $pad={2}>
					<LargeButton $w={40}>
						<IconBox>
							<IconNewScript />
						</IconBox>
						<ButtonLine>新建</ButtonLine>
						<ButtonLine>脚本</ButtonLine>
					</LargeButton>
					<LargeButton $w={40}>
						<IconBox>
							<IconPlusLarge />
						</IconBox>
						<ButtonLine>新建</ButtonLine>
						<ButtonLine>
							<Caret />
						</ButtonLine>
					</LargeButton>
					<LargeButton $w={40}>
						<IconBox>
							<IconFolderLarge />
						</IconBox>
						<ButtonLine>打开</ButtonLine>
						<ButtonLine>
							<Caret />
						</ButtonLine>
					</LargeButton>
					<SmallColumn $top={15} $w={72} $ml={6}>
						<SmallButton>
							<IconFind />
							查找文件
						</SmallButton>
						<SmallButton>
							<IconCompare />
							比较
						</SmallButton>
					</SmallColumn>
				</SectionBody>
				<SectionLabel>文件</SectionLabel>
			</Section>
			<Section $w={197}>
				<SectionBody $pad={1}>
					<LargeButton $w={42}>
						<IconBox>
							<IconImport />
						</IconBox>
						<ButtonLine>导入</ButtonLine>
						<ButtonLine>数据</ButtonLine>
					</LargeButton>
					<LargeButton $w={42}>
						<IconBox>
							<IconSaveWs />
						</IconBox>
						<ButtonLine>保存</ButtonLine>
						<ButtonLine>工作区</ButtonLine>
					</LargeButton>
					<SmallColumn $w={105} $ml={7}>
						<SmallButton>
							<IconNewVar />
							新建变量
						</SmallButton>
						<SmallButton>
							<IconOpenVar />
							打开变量
							<Caret $ml={3} />
						</SmallButton>
						<SmallButton>
							<IconClearWs />
							清除工作区
							<Caret $ml={8} />
						</SmallButton>
					</SmallColumn>
				</SectionBody>
				<SectionLabel>变量</SectionLabel>
			</Section>
			<Section $w={101}>
				<SectionBody $pad={7}>
					<SmallColumn $w={92}>
						<SmallButton>
							<IconAnalyze />
							分析代码
						</SmallButton>
						<SmallButton>
							<IconRunTime />
							运行和计时
						</SmallButton>
						<SmallButton>
							<IconClearCmd />
							清除命令
							<Caret $ml={8} />
						</SmallButton>
					</SmallColumn>
				</SectionBody>
				<SectionLabel>代码</SectionLabel>
			</Section>
			<Section $w={63}>
				<SectionBody $pad={0}>
					<LargeButton $w={62}>
						<IconBox>
							<IconSimulink />
						</IconBox>
						<ButtonLine>Simulink</ButtonLine>
						<ButtonLine>库</ButtonLine>
					</LargeButton>
				</SectionBody>
				<SectionLabel $latin>SIMULINK</SectionLabel>
			</Section>
			<Section $w={127}>
				<SectionBody $pad={2}>
					<LargeButton $w={40}>
						<IconBox>
							<IconLayout />
						</IconBox>
						<ButtonLine>布局</ButtonLine>
						<ButtonLine>
							<Caret />
						</ButtonLine>
					</LargeButton>
					<SmallColumn $w={84} $ml={5}>
						<SmallButton $gap={4}>
							<IconGear />
							预设
						</SmallButton>
						<SmallButton>
							<IconPath />
							设置路径
						</SmallButton>
						<SmallButton $gap={4}>
							<IconParallel />
							Parallel
							<Caret $ml={2} />
						</SmallButton>
					</SmallColumn>
				</SectionBody>
				<SectionLabel>环境</SectionLabel>
			</Section>
			<Section $w={134}>
				<SectionBody $pad={2}>
					<LargeButton $w={40}>
						<IconBox>
							<IconHelp />
						</IconBox>
						<ButtonLine>帮助</ButtonLine>
						<ButtonLine>
							<Caret />
						</ButtonLine>
					</LargeButton>
					<SmallColumn $w={90} $ml={6}>
						<SmallButton>
							<IconCommunity />
							社区
						</SmallButton>
						<SmallButton>
							<IconSupport />
							请求支持
						</SmallButton>
						<SmallButton>
							<IconAddon />
							附加功能
							<Caret $ml={5} />
						</SmallButton>
					</SmallColumn>
				</SectionBody>
				<SectionLabel>资源</SectionLabel>
			</Section>
		</Ribbon>
		<AddressBar>
			<NavButton $w={20}>
				<IconBack />
			</NavButton>
			<NavButton $w={24}>
				<IconForward />
			</NavButton>
			<NavButton $w={23}>
				<IconUpFolder />
			</NavButton>
			<NavButton $w={23}>
				<IconBrowse />
			</NavButton>
			<PathBox>
				<IconAddressFolder />
				<CrumbArrow $ml={5} />
				<Crumb $ml={7}>C:</Crumb>
				<CrumbArrow $ml={8} />
				<Crumb $ml={9}>Users</Crumb>
				<CrumbArrow $ml={9} />
				<Crumb $ml={11}>Administrator</Crumb>
				<CrumbArrow $ml={9} />
				<Crumb $ml={8}>Desktop</Crumb>
				<CrumbArrow $ml={9} />
				<Crumb $ml={10}>基于matlab编程SAR图像 C  S 成像源码程序</Crumb>
			</PathBox>
		</AddressBar>
		<Panels>
			<LeftPanel>
				<PanelHeader>
					当前文件夹
					<PanelMenu />
				</PanelHeader>
				<ColumnRow>
					<ColumnIcon>
						<IconPage />
					</ColumnIcon>
					<ColumnName>
						名称
						<SortCaret />
					</ColumnName>
				</ColumnRow>
				<TreeGroup>
					<Collapse />
					脚本
				</TreeGroup>
				<TreeFile>
					<IconScript />
					main.m
				</TreeFile>
			</LeftPanel>
			<Gutter />
			<RightPanel>
				<PanelHeader>命令行窗口</PanelHeader>
				<Prompt>
					<FxMark>fx</FxMark>
					&nbsp;&gt;&gt;
				</Prompt>
			</RightPanel>
		</Panels>
		<FigureWindow>
			<FigureTitle>
				<FigureName>
					<IconMatlab s={16} bg />
					Figure 1
				</FigureName>
				<Caption>
					<CaptionButton $w={27} $first>
						<MinGlyph />
					</CaptionButton>
					<CaptionButton $w={27}>
						<MaxGlyph />
					</CaptionButton>
					<CaptionButton $w={47} $close>
						<svg width="14" height="12" viewBox="0 0 14 12">
							<path d="M2 1l10 10M12 1L2 11" stroke="#445" strokeWidth="3.600" />
							<path d="M2 1l10 10M12 1L2 11" stroke="#f4f4f4" strokeWidth="2.200" />
						</svg>
					</CaptionButton>
				</Caption>
			</FigureTitle>
			<FigureClient>
				<MenuBar>
					{MENU.map(([a, k, b]) => (
						<MenuItem key={k}>
							{a}
							<u>{k}</u>
							{b}
						</MenuItem>
					))}
					<MenuCorner>
						<svg width="9" height="9" viewBox="0 0 9 9">
							<path d="M1 2l5 4M4 7h4V3z" stroke="#000" strokeWidth="1.300" fill="#000" />
						</svg>
					</MenuCorner>
				</MenuBar>
				<ToolBar>
					<ToolButton>
						<ToolNew />
					</ToolButton>
					<ToolButton>
						<ToolOpen />
					</ToolButton>
					<ToolButton>
						<ToolSave />
					</ToolButton>
					<ToolButton>
						<ToolPrint />
					</ToolButton>
					<ToolSep $l={4} $r={5} />
					<ToolButton>
						<ToolPointer />
					</ToolButton>
					<ToolSep $l={3} $r={4} />
					<ToolButton>
						<ToolZoom />
					</ToolButton>
					<ToolButton>
						<ToolZoom minus />
					</ToolButton>
					<ToolButton $w={24}>
						<ToolHand />
					</ToolButton>
					<ToolButton $w={23}>
						<ToolRotate />
					</ToolButton>
					<ToolButton $w={24}>
						<ToolDataCursor />
					</ToolButton>
					<ToolButton>
						<ToolBrush />
					</ToolButton>
					<ToolCaret />
					<ToolSep $l={7} $r={4} />
					<ToolButton>
						<ToolLink />
					</ToolButton>
					<ToolSep $l={3} $r={4} />
					<ToolButton $w={23}>
						<ToolColorbar />
					</ToolButton>
					<ToolButton $w={23}>
						<ToolLegend />
					</ToolButton>
					<ToolSep $l={4} $r={4} />
					<ToolButton $w={23}>
						<ToolGrey />
					</ToolButton>
					<ToolButton $w={23}>
						<ToolFrame />
					</ToolButton>
				</ToolBar>
				<FigureBody>
					<Subplot tag="(a)" title="原始信号" fn={sourceSignal} spacing={1.5} />
					<Subplot tag="(b)" title="距离向匹配滤波后频谱" fn={rangeCompressed} spacing={2} />
					<Subplot tag="(c)" title="消除相位误差后频谱" fn={phaseCorrected} spacing={2} />
					<Subplot tag="(d)" title="目标图象" fn={targetImage} spacing={1.5} />
				</FigureBody>
			</FigureClient>
		</FigureWindow>
		<Logo>
			<svg width="54" height="54" viewBox="0 0 54 54" style={{ flex: "none" }}>
				<path d="M54 0H18Q2 0 2 16V38Q2 54 18 54H54z" fill="#e60012" />
				<path d="M54 11H22Q11 11 11 23V27Q11 39 22 39H40" fill="none" stroke="#fff" strokeWidth="4" />
				<rect x="25" y="29" width="15" height="10" fill="#fff" />
			</svg>
			<LogoText>
				<LogoName>谷速软件</LogoName>
				<LogoUrl>www.gususoft.com</LogoUrl>
			</LogoText>
		</Logo>
	</Desktop>
);

export default App;
